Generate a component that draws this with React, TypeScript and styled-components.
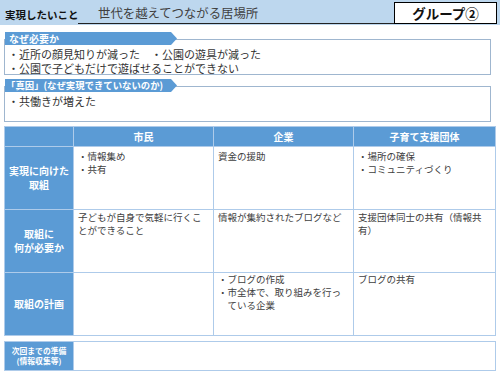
import React from 'react'
import styled, { createGlobalStyle } from 'styled-components'

const GlobalStyle = createGlobalStyle`
  html, body {
    margin: 0;
    padding: 0;
    background: #ffffff;
  }
  body {
    font-family: "Noto Sans CJK JP", "Noto Sans", sans-serif;
  }
`

const Page = styled.div`
  width: 500px;
  height: 375px;
  overflow: hidden;
  background: #ffffff;
`

const TopBar = styled.header`
  display: flex;
  align-items: stretch;
  height: 25px;
  background: #bdd7ee;
  padding-left: 5px;
`

const GoalLabel = styled.div`
  width: 73px;
  font-size: 10.5px;
  font-weight: bold;
  color: #111;
  line-height: 30px;
  white-space: nowrap;
`

const GoalTitle = styled.div`
  flex: 1;
  height: 23px;
  border-bottom: 1px solid #222;
  padding-left: 20px;
  font-size: 12.4px;
  color: #404040;
  line-height: 26px;
  white-space: nowrap;
`

const GroupBox = styled.div`
  width: 101px;
  height: 20px;
  margin: 2px 3px 0 0;
  border: 1.5px solid #000;
  border-bottom-width: 1px;
  background: #ffffff;
  font-size: 13.5px;
  font-weight: bold;
  color: #111;
  text-align: center;
  line-height: 20px;
`

const Section = styled.section<{ $top: number }>`
  margin: ${(p) => p.$top}px 9px 0 4px;
  height: 34px;
  border: 1px solid #9fb6cf;
`

const SectionLabel = styled.div<{ $size: number; $pad: number }>`
  width: ${(p) => 172 - p.$pad}px;
  height: 13px;
  margin-top: -8px;
  padding-left: ${(p) => p.$pad}px;
  background: #5b9bd5;
  clip-path: polygon(0 0, calc(100% - 6px) 0, 100% 50%, calc(100% - 6px) 100%, 0 100%);
  color: #ffffff;
  font-size: ${(p) => p.$size}px;
  font-weight: bold;
  line-height: 13px;
  white-space: nowrap;
`

const SectionText = styled.div`
  padding: 2px 0 0 3px;
  font-size: 11px;
  line-height: 14px;
  color: #333;
  white-space: pre;
`

const Grid = styled.div<{ $rows: string; $top: number }>`
  display: grid;
  grid-template-columns: 68px 139px 139px 141px;
  grid-template-rows: ${(p) => p.$rows};
  gap: 1px;
  padding: 1px;
  width: 492px;
  margin: ${(p) => p.$top}px 0 0 4px;
  background: #aecbea;
  box-sizing: border-box;
`

const HeadCell = styled.div`
  display: flex;
  align-items: center;
  justify-content: center;
  background: #5b9bd5;
  color: #ffffff;
  font-size: 10px;
  font-weight: bold;
  text-align: center;
`

const RowHead = styled(HeadCell)<{ $size?: number; $lh?: number }>`
  font-size: ${(p) => p.$size ?? 10}px;
  line-height: ${(p) => p.$lh ?? 14}px;
`

const Cell = styled.div<{ $pt?: number }>`
  background: #ffffff;
  padding: ${(p) => p.$pt ?? 3}px 3px 0 4px;
  font-size: 9.5px;
  line-height: 13px;
  color: #404040;
`

const WideCell = styled(Cell)`
  grid-column: 2 / 5;
`

const Item = styled.div`
  padding-left: 1em;
  text-indent: -1em;
`

const columns = ['市民', '企業', '子育て支援団体']

const App: React.FC = () => {
  return (
    <>
      <GlobalStyle />
      <Page>
        <TopBar>
          <GoalLabel>実現したいこと</GoalLabel>
          <GoalTitle>世代を越えてつながる居場所</GoalTitle>
          <GroupBox>グループ②</GroupBox>
        </TopBar>

        <Section $top={14}>
          <SectionLabel $size={10} $pad={4}>なぜ必要か</SectionLabel>
          <SectionText>
            {'・近所の顔見知りが減った　・公園の遊具が減った\n・公園で子どもだけで遊ばせることができない'}
          </SectionText>
        </Section>

        <Section $top={11}>
          <SectionLabel $size={9.4} $pad={1}>「真因」(なぜ実現できていないのか)</SectionLabel>
          <SectionText>・共働きが増えた</SectionText>
        </Section>

        <Grid $rows="19px 62px 62px 62px" $top={4}>
          <HeadCell />
          {columns.map((c) => (
            <HeadCell key={c}>{c}</HeadCell>
          ))}

          <RowHead>
            実現に向けた
            <br />
            取組
          </RowHead>
          <Cell>
            <Item>・情報集め</Item>
            <Item>・共有</Item>
          </Cell>
          <Cell>資金の援助</Cell>
          <Cell>
            <Item>・場所の確保</Item>
            <Item>・コミュニティづくり</Item>
          </Cell>

          <RowHead>
            取組に
            <br />
            何が必要か
          </RowHead>
          <Cell $pt={1}>子どもが自身で気軽に行くことができること</Cell>
          <Cell $pt={1}>情報が集約されたブログなど</Cell>
          <Cell $pt={1}>支援団体同士の共有（情報共有）</Cell>

          <RowHead>取組の計画</RowHead>
          <Cell $pt={0} />
          <Cell $pt={0}>
            <Item>・ブログの作成</Item>
            <Item>・市全体で、取り組みを行っている企業</Item>
          </Cell>
          <Cell $pt={0}>ブログの共有</Cell>
        </Grid>

        <Grid $rows="28px" $top={5}>
          <RowHead $size={7.8} $lh={10}>
            次回までの準備
            <br />
            (情報収集等)
          </RowHead>
          <WideCell />
        </Grid>
      </Page>
    </>
  )
}

export default App
